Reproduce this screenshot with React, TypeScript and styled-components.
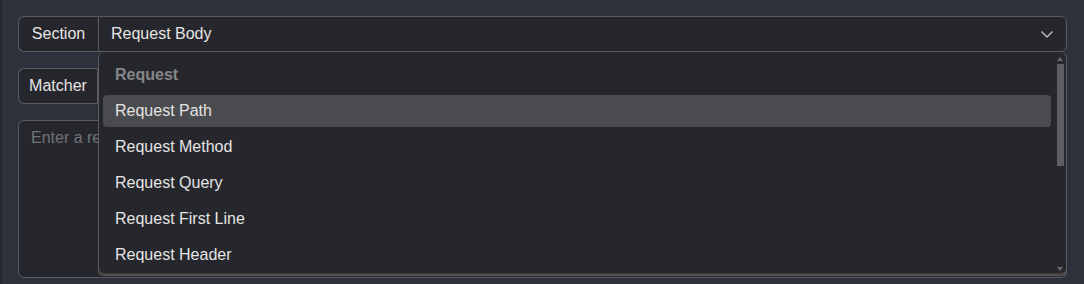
import * as React from 'react';
import styled, { createGlobalStyle } from 'styled-components';

const GlobalStyle = createGlobalStyle`
  html, body {
    margin: 0;
    padding: 0;
    background: #2e313b;
    font-family: "Liberation Sans", Arial, sans-serif;
  }
`;

const options = [
  'Request Path',
  'Request Method',
  'Request Query',
  'Request First Line',
  'Request Header',
];

export default function App() {
  return (
    <>
      <GlobalStyle />
      <Panel>
        <FieldGroup>
          <Label width={80}>Section</Label>
          <SelectBox>
            <span>Request Body</span>
            <Chevron viewBox="0 0 14 14">
              <path d="M1.5 4.5 L7 10 L12.5 4.5" />
            </Chevron>
            <Dropdown>
              <List>
                <GroupHeader>Request</GroupHeader>
                {options.map((o, i) => (
                  <Option key={o} active={i === 0}>
                    {o}
                  </Option>
                ))}
              </List>
              <ScrollTrack>
                <Arrow up />
                <Thumb />
                <Spacer />
                <Arrow />
              </ScrollTrack>
            </Dropdown>
          </SelectBox>
        </FieldGroup>
        <FieldGroup>
          <Label width={79}>Matcher</Label>
          <InputBox />
        </FieldGroup>
        <TextArea placeholder="Enter a regex" />
      </Panel>
    </>
  );
}

const Panel = styled.div`
  display: flex;
  flex-direction: column;
  gap: 16px;
  height: 284px;
  box-sizing: border-box;
  padding: 16px 17px 6px 16px;
  border-left: 2px solid #25272d;
`;

const FieldGroup = styled.div`
  display: flex;
  height: 36px;
`;

const Label = styled.div<{ width: number }>`
  display: flex;
  align-items: center;
  justify-content: center;
  width: ${p => p.width}px;
  box-sizing: border-box;
  background: #26272c;
  border: 1px solid #5b5c61;
  border-right: none;
  border-radius: 6px 0 0 6px;
  color: #e4e4e4;
  font-size: 16px;
`;

const SelectBox = styled.div`
  position: relative;
  flex: 1;
  display: flex;
  align-items: center;
  justify-content: space-between;
  padding: 0 12px;
  background: #26272c;
  border: 1px solid #5b5c61;
  border-radius: 0 6px 6px 0;
  color: #e4e4e4;
  font-size: 16px;
`;

const InputBox = styled.div`
  flex: 1;
  background: #26272c;
  border: 1px solid #5b5c61;
  border-radius: 0 6px 6px 0;
`;

const Chevron = styled.svg`
  width: 14px;
  height: 14px;
  fill: none;
  stroke: #b5b5b8;
  stroke-width: 1.5;
`;

const TextArea = styled.textarea`
  flex: 1;
  resize: none;
  background: #26272c;
  border: 1px solid #5b5c61;
  border-radius: 6px;
  padding: 8px 12px;
  color: #e4e4e4;
  font-family: "Liberation Sans", Arial, sans-serif;
  font-size: 16px;
  outline: none;
  &::placeholder {
    color: #6f7279;
  }
`;

const Dropdown = styled.div`
  position: absolute;
  top: 35px;
  left: -1px;
  right: -1px;
  height: 224px;
  box-sizing: border-box;
  display: flex;
  background: #26272c;
  border: 1px solid #5b5c61;
  border-top: none;
  border-radius: 6px;
  box-shadow: inset 0 -2px 0 #4a4539;
  z-index: 10;
`;

const List = styled.div`
  flex: 1;
  display: flex;
  flex-direction: column;
  gap: 4px;
  padding: 7px 4px 0 4px;
  overflow: hidden;
`;

const GroupHeader = styled.div`
  height: 32px;
  flex-shrink: 0;
  display: flex;
  align-items: center;
  padding: 0 12px;
  color: #85868a;
  font-weight: bold;
  font-size: 16px;
`;

const Option = styled.div<{ active?: boolean }>`
  height: 32px;
  flex-shrink: 0;
  display: flex;
  align-items: center;
  padding: 0 12px;
  border-radius: 4px;
  background: ${p => (p.active ? '#4a4b4e' : 'transparent')};
  color: #e4e4e4;
  font-size: 16px;
`;

const ScrollTrack = styled.div`
  width: 8px;
  margin: 0 2px 0 1px;
  display: flex;
  flex-direction: column;
  align-items: center;
  padding: 5px 0 4px;
`;

const Arrow = styled.div<{ up?: boolean }>`
  width: 0;
  height: 0;
  border-left: 3px solid transparent;
  border-right: 3px solid transparent;
  ${p =>
    p.up
      ? 'border-bottom: 4px solid #6a6b70;'
      : 'border-top: 4px solid #6a6b70;'}
`;

const Thumb = styled.div`
  width: 7px;
  height: 102px;
  margin-top: 3px;
  background: #5e5f63;
`;

const Spacer = styled.div`
  flex: 1;
`;
